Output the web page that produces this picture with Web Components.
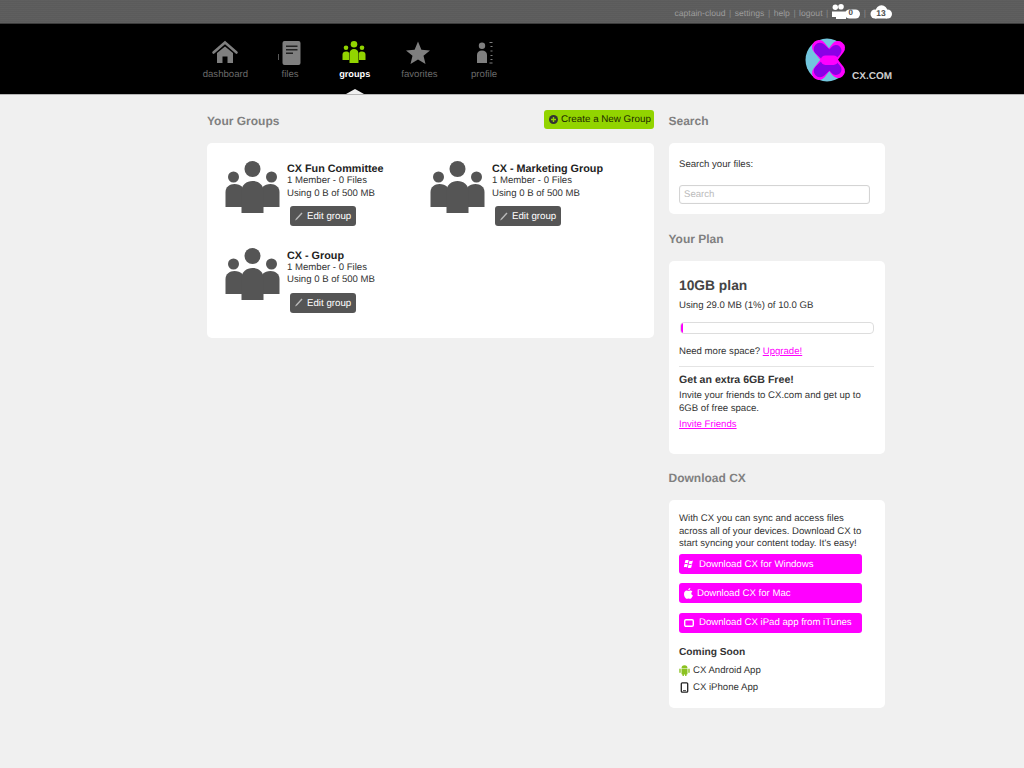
<!DOCTYPE html>
<html lang="en"><head><meta charset="utf-8"><title>CX Groups</title>
<style>
html,body{margin:0;padding:0;background:#f0f0f0;font:9.6px/12.5px "Liberation Sans",Arial,sans-serif;color:#333;text-rendering:geometricPrecision}
</style></head>
<body>
<cx-topbar></cx-topbar>
<cx-nav></cx-nav>
<cx-page>
  <cx-section slot="main" title="Your Groups">
    <cx-create slot="action">Create a New Group</cx-create>
    <cx-card pad="groups">
      <cx-groups>
        <cx-group name="CX Fun Committee"></cx-group>
        <cx-group name="CX - Marketing Group"></cx-group>
        <cx-group name="CX - Group"></cx-group>
      </cx-groups>
    </cx-card>
  </cx-section>
  <cx-section slot="side" title="Search">
    <cx-card><cx-search></cx-search></cx-card>
  </cx-section>
  <cx-section slot="side" title="Your Plan">
    <cx-card><cx-plan></cx-plan></cx-card>
  </cx-section>
  <cx-section slot="side" title="Download CX" style="margin-top:-1px">
    <cx-card><cx-download></cx-download></cx-card>
  </cx-section>
</cx-page>
<script>
const FONT='"Liberation Sans",Arial,sans-serif';
function def(name,html){
  customElements.define(name,class extends HTMLElement{
    connectedCallback(){
      if(this.shadowRoot)return;
      const r=this.attachShadow({mode:'open'});
      r.innerHTML=typeof html==='function'?html(this):html;
    }
  });
}
const PEOPLE=`<circle cx="27" cy="8" r="8"/><circle cx="8" cy="16" r="5.5"/><circle cx="46" cy="16" r="5.5"/>
<path d="M0 46V31c0-5 4-8 9-8 3 0 6 1 8 3v20z"/><path d="M54 46V31c0-5-4-8-9-8-3 0-6 1-8 3v20z"/><path d="M16 52V30c0-6 5-10 11-10s11 4 11 10v22z"/>`;

def('cx-topbar',`<style>
:host{display:block;height:23px;background-color:#5b5b5b;border-bottom:1px solid #3c3c3c;
background-image:repeating-linear-gradient(0deg,rgba(255,255,255,.025) 0 1px,transparent 1px 2px)}
.w{display:flex;justify-content:flex-end;align-items:center;height:23px;padding-right:132px;font:8.600px/12px ${FONT};color:#9c9c9c}
.w>span,.w>i{margin-top:2px}
i{font-style:normal;margin:0 3.500px;color:#8a8a8a}
svg{display:block}
.b{display:grid;flex:none}
.b>*{grid-area:1/1}
.b span{font:bold 8px/10px ${FONT};color:#4c4c4c;text-align:center;align-self:end}
</style><div class="w"><span>captain-cloud</span><i>|</i><span>settings</span><i>|</i><span>help</span><i>|</i><span>logout</span><i>|</i>
<div class="b" style="width:28px;height:16px"><svg width="28" height="16" viewBox="0 0 28 16" fill="#fff"><circle cx="3.300" cy="3.200" r="2.700"/><circle cx="9" cy="2.800" r="2.800"/><path d="M0 7.500h14V15H4V13H0z"/><rect x="13" y="5.500" width="15" height="9" rx="4.500"/></svg><span style="margin:0 3px 2px 13px">0</span></div>
<i style="margin:2px 4px 0 4px">|</i>
<div class="b" style="width:22px;height:14px"><svg width="22" height="14" viewBox="0 0 22 14" fill="#fff"><circle cx="11.500" cy="6" r="5.800"/><circle cx="5" cy="9" r="4.500"/><circle cx="17.500" cy="9" r="4.500"/><rect x="5" y="7" width="12" height="6.500"/></svg><span style="margin:0 0 1px;font-size:8.500px">13</span></div>
</div>`);

const ICONS={
home:`<svg width="28" height="25" viewBox="0 0 28 25"><path d="M2.500 12.500 14 2.500l11.500 10" fill="none" stroke="currentColor" stroke-width="2.600" stroke-linecap="round" stroke-linejoin="miter"/><path fill="currentColor" d="M14 6.500l8 6.500v10h-5.500v-6.500h-5V23H6V13z"/></svg>`,
files:`<svg width="28" height="25" viewBox="0 0 28 25"><path fill="currentColor" d="M8.500 1h14a2 2 0 0 1 2 2v20a2 2 0 0 1-2 2h-14a2 2 0 0 1-2-2V3a2 2 0 0 1 2-2zM2 14h.7v6H2z"/><path fill="#222" d="M10 5.500h11.500V7H10zM10 9h11.500v1.500H10zM10 12.500h7V14h-7z"/></svg>`,
groups:`<svg width="28" height="25" viewBox="0 0 28 25" fill="currentColor"><circle cx="13" cy="4.300" r="3.300"/><circle cx="5" cy="7.700" r="2.300"/><circle cx="21" cy="7.700" r="2.300"/><path d="M1.500 20v-5.500c0-2 1.500-3 3.500-3 1.500 0 2.500.5 3 1.200V20zM24.500 20v-5.500c0-2-1.500-3-3.500-3-1.500 0-2.500.5-3 1.200V20z"/><path d="M8.500 23V13.500c0-2.500 2-4.500 4.500-4.500s4.500 2 4.500 4.500V23z"/></svg>`,
star:`<svg width="28" height="25" viewBox="0 0 28 25"><path fill="currentColor" d="M13 1.500l3.400 8.200 8.600.7-6.500 5.400 2 8.200-7.500-4.400-7.500 4.400 2-8.200L1 10.400l8.600-.7z"/></svg>`,
profile:`<svg width="28" height="25" viewBox="0 0 28 25"><path fill="currentColor" d="M12 2.500a3.200 3.200 0 1 1 0 6.400 3.200 3.200 0 0 1 0-6.400zM12 10.500c3 0 5 1.700 5 4.500v8H7v-8c0-2.800 2-4.500 5-4.500z"/><path fill="currentColor" d="M19.500 2h3v1h-3zM20.500 6h2v1h-2zM20.500 10.500h2v1h-2zM20.500 15h2v1h-2zM20.500 19h2v1h-2zM19.500 22.500h3v1h-3z"/></svg>`};

def('cx-nav-item',h=>`<style>
:host{display:block;width:64.700px;position:relative}
.ic{display:flex;justify-content:center;height:25px;margin-top:16px;color:#7f7f7f}
.ic svg{display:block}
:host([active]) .ic{color:#92d400}
.t{display:block;text-align:center;font:9.600px/12px ${FONT};margin-top:4px;color:#6a6a6a}
:host([active]) .t{font-weight:bold;font-size:9.200px;color:#fff;margin-top:3px}
:host([active])::after{content:"";position:absolute;left:50%;margin-left:-9px;top:65px;border:9px solid transparent;border-top:0;border-bottom:5px solid #f0f0f0}
</style><span class="ic">${ICONS[h.getAttribute('icon')]}</span><span class="t">${h.getAttribute('label')}</span>`);

def('cx-logo',`<style>:host{display:flex;align-items:flex-end;height:70px}
svg{display:block;align-self:flex-start;margin-top:11px}
b{font:bold 10px/11px ${FONT};color:#cfcfcf;margin:0 0 12px 2px;white-space:nowrap}</style>
<svg width="46" height="50" viewBox="0 0 46 50">
<circle cx="23" cy="25" r="21.500" fill="#72c6de"/>
<path d="M26 25 46 8V42z" fill="#000"/>
<g fill="none" stroke="#f0f" stroke-width="14" stroke-linecap="round"><path d="M15 12 34 36M34 13 15 38"/></g>
<g fill="none" stroke="#8a00e6" stroke-linecap="round"><path stroke-width="12.500" d="M16 14 24 21.500M16 36 24 28.500"/><path stroke-width="11" d="M32 15.500 27 21M32 34.500 27 29"/></g>
<path d="M21.500 25.200H29.500" fill="none" stroke="#f0f" stroke-width="9.500" stroke-linecap="round"/></svg><b>CX.COM</b>`);

def('cx-nav',`<style>
:host{display:block;height:70px;background:#000;border-bottom:1px solid #b5b5b5}
.w{display:flex;height:70px;padding-left:193px;box-sizing:border-box;width:892px}
.s{flex:1}
</style><div class="w">
<cx-nav-item icon="home" label="dashboard"></cx-nav-item>
<cx-nav-item icon="files" label="files"></cx-nav-item>
<cx-nav-item icon="groups" label="groups" active></cx-nav-item>
<cx-nav-item icon="star" label="favorites"></cx-nav-item>
<cx-nav-item icon="profile" label="profile"></cx-nav-item>
<span class="s"></span><cx-logo></cx-logo></div>`);

def('cx-page',`<style>
:host{display:flex;gap:14.500px;padding:4px 0 0 207px;width:678px;height:669px;box-sizing:content-box}
.m{display:block;width:447px;flex:none}.r{display:flex;flex-direction:column;gap:3px;width:216px;flex:none}
</style><div class="m"><slot name="main"></slot></div><div class="r"><slot name="side"></slot></div>`);

def('cx-section',h=>`<style>
:host{display:block}
header{display:flex;justify-content:space-between;align-items:center;height:44px;box-sizing:border-box}
h2{margin:0;font:bold 12px/16px ${FONT};color:#808080}
</style><header><h2>${h.getAttribute('title')}</h2><slot name="action"></slot></header><slot></slot>`);

def('cx-card',`<style>:host{display:block;background:#fff;border-radius:5px;padding:0 10.500px;overflow:hidden}
:host([pad=groups]){padding:0}</style><slot></slot>`);

def('cx-create',`<style>:host{display:flex;align-items:center;height:19px;width:110px;box-sizing:border-box;padding-left:5px;gap:3px;background:#92d400;border-radius:3px;
font:9.800px/12px ${FONT};color:#1d2a00;margin-top:-3px;white-space:nowrap}
svg{display:block}.t{padding-top:1px}</style><svg width="9" height="9" viewBox="0 0 9 9"><circle cx="4.500" cy="4.500" r="4.500" fill="#333"/><path d="M2 3.800h1.800V2h1.400v1.800H7v1.400H5.200V7H3.800V5.200H2z" fill="#92d400"/></svg><span class="t"><slot></slot></span>`);

def('cx-groups',`<style>:host{display:grid;grid-template-columns:205px 205px;grid-auto-rows:86.500px;padding:18px 0 4px 18px;height:173px;box-sizing:content-box}</style><slot></slot>`);

def('cx-group',h=>`<style>
:host{display:flex;gap:7px;color:#333}
svg{display:block;flex:none}
h3{margin:2px 0 0;font:bold 10.800px/12px ${FONT};color:#222}
p{margin:0;font:9.600px/12.500px ${FONT}}
.e{display:flex;align-items:center;gap:4px;width:66px;height:20px;margin:6px 0 0 3px;padding-left:5px;box-sizing:border-box;background:#555;border-radius:3px;color:#fff;font:9.700px/12px ${FONT};white-space:nowrap}
.e span{padding-top:2px}
</style><svg width="55" height="52" viewBox="0 0 54 52" fill="#555">${PEOPLE}</svg>
<div><h3>${h.getAttribute('name')}</h3><p>1 Member - 0 Files</p><p>Using 0 B of 500 MB</p>
<div class="e"><svg width="8" height="9" viewBox="0 0 8 9"><path d="M6.500.5 7.500 1.500 2 7.500 0 8.500 1 6.500z" fill="#bbb"/></svg><span>Edit group</span></div></div>`);

def('cx-search',`<style>:host{display:block;height:71px;box-sizing:border-box;padding-top:15px;font:9.600px/13px ${FONT};color:#333}
.i{margin-top:14px;width:191px;height:19px;box-sizing:border-box;border:1px solid #d4d4d4;border-radius:3px;padding:3px 4px;color:#bbb;font:9.600px/12px ${FONT};box-shadow:inset 0 0 1px #ddd}
</style><div>Search your files:</div><div class="i">Search</div>`);

def('cx-plan',`<style>:host{display:block;height:193px;box-sizing:border-box;padding-top:16px;font:9.600px/12.500px ${FONT};color:#333}
h3{margin:0;font:bold 13.800px/17px ${FONT};color:#444}
p{margin:0}
.u{margin-top:6px}
.bar{margin:9.500px 0 0 1px;width:194px;height:12px;box-sizing:border-box;border:1px solid #ddd;border-radius:4px;overflow:hidden}
.bar i{display:block;width:2px;height:10px;background:#f0f}
.n{margin-top:12px}
a{color:#f0f;text-decoration:underline}
hr{margin:7px 0 6.500px;border:0;border-top:1px solid #e4e4e4;width:195px}
h4{margin:0 0 3px;font:bold 10.600px/14px ${FONT};color:#333}
.i{margin-top:4px}
</style><h3>10GB plan</h3><p class="u">Using 29.0 MB (1%) of 10.0 GB</p><div class="bar"><i></i></div>
<p class="n">Need more space? <a>Upgrade!</a></p><hr>
<h4>Get an extra 6GB Free!</h4><p>Invite your friends to CX.com and get up to<br>6GB of free space.</p><p class="i"><a>Invite Friends</a></p>`);

def('cx-dl',h=>`<style>:host{display:flex;align-items:center;gap:var(--g,5px);width:183px;height:20px;box-sizing:border-box;padding-left:5px;background:#f0f;border-radius:3px;color:#fff;font:9.650px/12px ${FONT};white-space:nowrap;margin-bottom:9.300px}
svg{display:block;flex:none}span{padding-top:1px}</style>${h.innerHTML}`);

def('cx-download',`<style>:host{display:block;height:208px;box-sizing:border-box;padding-top:13px;font:9.600px/12.500px ${FONT};color:#333}
p{margin:0}
.l{margin-top:3.500px}
h4{margin:0;padding-top:4.500px;font:bold 10.200px/14px ${FONT};color:#333}
.s{display:flex;align-items:center;gap:3px;height:16.500px}
.s svg{display:block;flex:none;margin-bottom:2px}
.f{margin-top:3px}
</style><p>With CX you can sync and access files<br>across all of your devices. Download CX to<br>start syncing your content today. It's easy!</p>
<div class="l">
<cx-dl><svg width="10" height="10" viewBox="0 0 11 11" fill="#fff"><path d="M1.500 1.500c1.300-.7 2.500-.7 3.700 0L4.300 5c-1.200-.7-2.400-.7-3.600 0zM6 1.800c1.200.6 2.400.6 3.800-.2L9 5c-1.300.8-2.500.8-3.800.2zM.5 5.900c1.200-.7 2.400-.7 3.600 0L3.300 9.300c-1.200-.7-2.400-.7-3.600 0zM5 6.100c1.200.6 2.400.6 3.800-.2L8 9.300c-1.300.8-2.500.8-3.800.2z"/></svg><span>Download CX for Windows</span></cx-dl>
<cx-dl style="--g:4px"><svg width="9" height="11" viewBox="0 0 9 11" fill="#fff"><path d="M6.300 0c0 1.300-1 2.300-2.100 2.300C4.100 1.100 5.100.1 6.300 0zM4.400 2.900c.6 0 1.100-.4 2-.4.700 0 1.500.4 2 1-1.700 1-1.400 3.400.5 4.100-.5 1.300-1.500 3.200-2.600 3.200-.7 0-1-.4-1.800-.4s-1.200.4-1.800.4C1.500 10.800 0 8.200 0 6 0 3.800 1.400 2.500 2.700 2.500c.7 0 1.300.4 1.700.4z"/></svg><span>Download CX for Mac</span></cx-dl>
<cx-dl><svg width="10" height="8" viewBox="0 0 10 8"><rect x=".7" y=".7" width="8.600" height="6.600" rx="1.300" fill="none" stroke="#fff" stroke-width="1.400"/></svg><span>Download CX iPad app from iTunes</span></cx-dl>
</div>
<h4>Coming Soon</h4>
<div class="f">
<div class="s"><svg width="11" height="11" viewBox="0 0 11 11" fill="#8bc220"><path d="M2.500 3.300a3 3 0 0 1 6 0zM2.500 3.800h6v5a.7.7 0 0 1-.7.7H3.200a.7.7 0 0 1-.7-.7zM.3 4.300a.7.7 0 0 1 1.400 0v3a.7.7 0 0 1-1.400 0zM9.300 4.300a.7.7 0 0 1 1.400 0v3a.7.7 0 0 1-1.400 0zM3.500 9.200h1.400V11H3.500zM6.100 9.200h1.400V11H6.100z"/></svg><span>CX Android App</span></div>
<div class="s"><svg width="11" height="11" viewBox="0 0 11 11"><rect x="2.300" y=".8" width="6.400" height="9.400" rx="1" fill="none" stroke="#222" stroke-width="1.300"/><path d="M4 8.300h3V9H4z" fill="#222"/></svg><span>CX iPhone App</span></div>
</div>`);
</script>
</body></html>
